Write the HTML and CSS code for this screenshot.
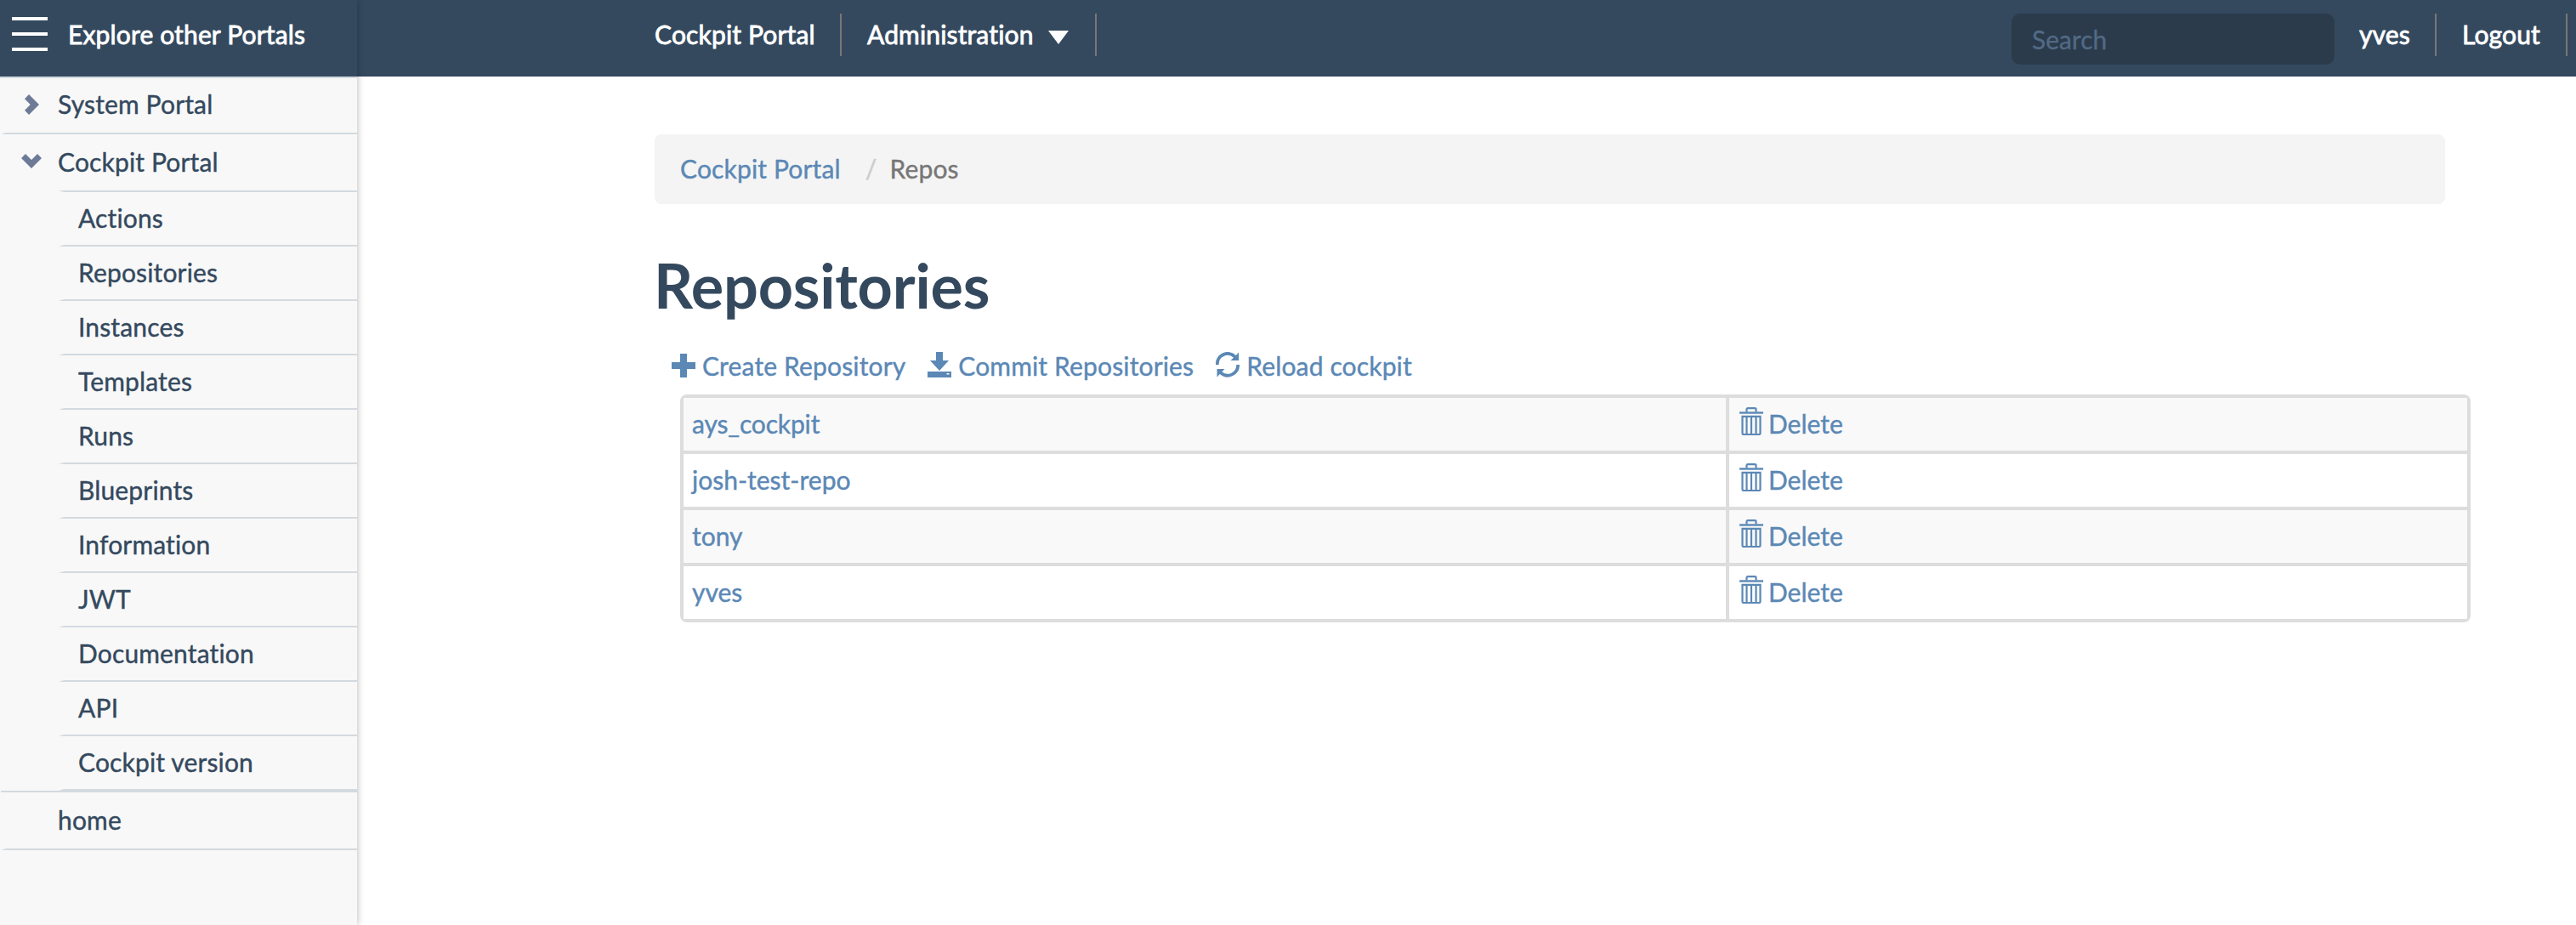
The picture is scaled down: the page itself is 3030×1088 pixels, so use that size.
FILE: index.html
```html
<!DOCTYPE html>
<html lang="en">
<head>
<meta charset="utf-8">
<title>Repositories</title>
<link rel="stylesheet" href="styles.css">
</head>
<body>
<svg class="sprite" aria-hidden="true">
  <symbol id="right" viewBox="0 0 17 24"><path d="M5 0L17 12L5 24L0 18.7L6.7 12L0 5.3Z"/></symbol>
  <symbol id="down" viewBox="0 0 24 17"><path d="M0 5L5 0L12 7L19 0L24 5L12 17Z"/></symbol>
  <symbol id="plus" viewBox="0 0 28 28"><path d="M10 0h8v10h10v8H18v10h-8V18H0v-8h10z"/></symbol>
  <symbol id="save" viewBox="0 0 28 30"><path d="M10 0h8v10h7L14 22L3 10h7zM0 23h28v7H0zM22.5 25v1.5h3V25z" fill-rule="evenodd"/></symbol>
  <symbol id="reload" viewBox="0 0 28 30"><path d="M0 15A14 14 0 0 1 23.8 4L27 .5V10H17.5L21 6.700A10.300 10.300 0 0 0 3.700 15zM28 15A14 14 0 0 1 4.800 26L1.500 29.500V20H10.500L7.400 23.300A10.300 10.300 0 0 0 24.300 15z"/></symbol>
  <symbol id="trash" viewBox="0 0 28 33"><path d="M0 5.300h28v2.400H0z"/><path d="M8.500 5.500V2.500Q8.500 1.200 10 1.200h8Q19.500 1.200 19.500 2.500V5.500M3.500 10.800h21V30.500Q24.500 32 23 32H5Q3.500 32 3.500 30.500zM8.500 11v21M14 11v21M19.500 11v21" fill="none" stroke="currentColor" stroke-width="2.2"/></symbol>
</svg>
<div class="app">
  <aside class="sidebar">
    <div class="explore"><span class="burger"><i></i><i></i><i></i></span><span class="explore-label">Explore other Portals</span></div>
    <ul class="tree">
      <li><a class="portal first"><svg class="chev-right"><use href="#right"/></svg><span>System Portal</span></a></li>
      <li><a class="portal open"><svg class="chev-down"><use href="#down"/></svg><span>Cockpit Portal</span></a>
        <ul class="pages">
          <li>Actions</li>
          <li>Repositories</li>
          <li>Instances</li>
          <li>Templates</li>
          <li>Runs</li>
          <li>Blueprints</li>
          <li>Information</li>
          <li>JWT</li>
          <li>Documentation</li>
          <li>API</li>
          <li>Cockpit version</li>
        </ul>
      </li>
      <li><a class="portal"><span>home</span></a></li>
    </ul>
  </aside>
  <div class="page">
    <header class="topbar">
      <nav class="menu"><a>Cockpit Portal</a><a>Administration<i class="caret"></i></a></nav>
      <input class="search" type="text" placeholder="Search">
      <nav class="menu account"><a>yves</a><a>Logout</a></nav>
    </header>
    <main class="content">
      <div class="breadcrumb"><a>Cockpit Portal</a><span class="slash">/</span><span>Repos</span></div>
      <h1>Repositories</h1>
      <div class="actions">
        <a><svg class="i-plus"><use href="#plus"/></svg>Create Repository</a>
        <a><svg class="i-save"><use href="#save"/></svg>Commit Repositories</a>
        <a><svg class="i-save"><use href="#reload"/></svg>Reload cockpit</a>
      </div>
      <div class="table">
        <div class="cell odd">ays_cockpit</div><div class="cell odd del"><svg class="i-trash"><use href="#trash"/></svg>Delete</div>
        <div class="cell">josh-test-repo</div><div class="cell del"><svg class="i-trash"><use href="#trash"/></svg>Delete</div>
        <div class="cell odd">tony</div><div class="cell odd del"><svg class="i-trash"><use href="#trash"/></svg>Delete</div>
        <div class="cell">yves</div><div class="cell del"><svg class="i-trash"><use href="#trash"/></svg>Delete</div>
      </div>
    </main>
  </div>
</div>
</body>
</html>
```
FILE: styles.css
```css
* { box-sizing: border-box; }
html, body { height: 100%; overflow: hidden; }
body { margin: 0; font: 30px/36px Lato, sans-serif; letter-spacing: 0.15px; font-variant-ligatures: none; color: #34495e; background: #fff; -webkit-text-stroke: 0.4px currentColor; }
ul { list-style: none; margin: 0; padding: 0; }
svg { display: block; fill: currentColor; flex: none; }
.sprite { position: absolute; width: 0; height: 0; }
.app { display: flex; height: 100%; overflow: hidden; }

.sidebar { width: 420px; flex: none; background: #f8f8f8; box-shadow: 0 0 8px rgba(0, 0, 0, 0.3); position: relative; z-index: 1; }
.explore { height: 90px; background: #34495e; color: #fff; display: flex; padding: 20px 0 0 14px; }
.burger { width: 42px; height: 40px; display: flex; flex-direction: column; justify-content: space-between; }
.burger i { height: 4px; background: #fff; }
.explore-label { margin: 2px 0 0 24px; -webkit-text-stroke-width: 0.8px; }
.tree { border-top: 2px solid #d3dae0; padding-left: 1px; }
.portal { display: flex; position: relative; height: 68px; padding: 14px 0 0 61px; border-bottom: 2px solid #d3dae0; border-left: 6px solid transparent; }
.portal.first { height: 66px; padding-top: 12px; }
.portal.open { height: 66px; border-bottom: 0; }
.chev-right { position: absolute; left: 22px; top: 19px; width: 17px; height: 24px; color: #6d7b97; }
.chev-down { position: absolute; left: 18px; top: 23px; width: 24px; height: 17px; color: #6d7b97; }
.pages { padding-left: 68px; border-bottom: 2px solid #d3dae0; }
.pages li { height: 64px; padding: 12px 0 0 17px; border-bottom: 2px solid #d3dae0; border-left: 6px solid transparent; }
.pages li:first-child { height: 66px; border-top: 2px solid #d3dae0; }

.page { flex: 1; min-width: 0; }
.topbar { height: 90px; background: #34495e; border-bottom: 1px solid #2f4160; color: #fff; display: flex; padding: 16px 10px 0 350px; white-space: nowrap; -webkit-text-stroke-width: 0.8px; }
.menu { display: flex; flex: 1; }
.menu a { display: flex; flex: none; height: 50px; padding: 6px 30px 0; border-right: 2px solid #777; }
.menu a:first-child { padding-left: 0; width: 220px; }
.menu a:nth-child(2) { width: 300px; }
.caret { margin: 14px 0 0 17px; width: 0; height: 0; border: 12px solid transparent; border-top: 16px solid #fff; border-bottom: 0; }
.menu.account { flex: none; }
.menu.account a:first-child { width: 120px; padding-left: 29px; }
.menu.account a:nth-child(2) { width: 154px; padding-left: 30px; }
.search { width: 380px; height: 60px; border: 0; border-radius: 10px; background: #2b3b4b; padding: 0 24px; font: inherit; letter-spacing: 0; color: #fff; -webkit-text-stroke-width: 0.3px; }
.search::placeholder { color: #526a86; opacity: 1; }

.content { padding: 68px 0 0 350px; color: #5b88b5; }
.breadcrumb { width: 2106px; height: 82px; border-radius: 8px; background: #f4f4f4; padding: 22px 30px 0; display: flex; color: #777; }
.breadcrumb a { color: #5b88b5; }
.slash { color: #ccc; margin: 0 15px 0 29px; }
h1 { margin: 52px 0 0 -1px; font: bold 72px/86px Lato, sans-serif; letter-spacing: -0.2px; color: #34495e; -webkit-text-stroke-width: 0; }
.actions { display: flex; gap: 26px; padding: 34px 0 0 20px; }
.actions a { display: flex; gap: 8px; }
.i-plus { width: 28px; height: 28px; margin-top: 4px; }
.i-save { width: 28px; height: 30px; margin-top: 2px; }
.table { margin: 16px 0 0 30px; width: 2106px; display: grid; grid-template-columns: 1226px 868px; grid-auto-rows: 62px; gap: 4px; padding: 4px; border-radius: 8px; background: #ddd; letter-spacing: 0; }
.cell { background: #fff; padding: 12px 0 0 10px; }
.cell:first-child { letter-spacing: -0.15px; }
.odd { background: #f9f9f9; }
.del { display: flex; gap: 6px; padding-left: 12px; }
.i-trash { width: 28px; height: 33px; margin-top: -1px; }
```
